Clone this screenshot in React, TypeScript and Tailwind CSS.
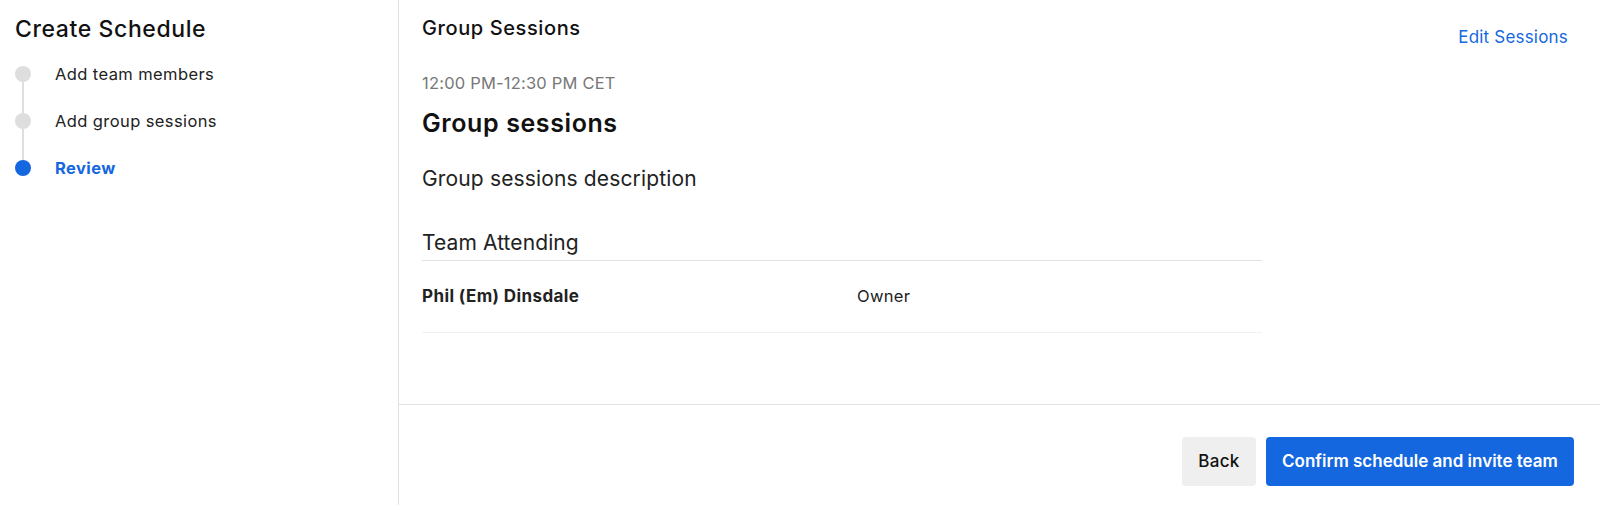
import React from 'react';

const steps = [
  { label: 'Add team members', done: true },
  { label: 'Add group sessions', done: true },
  { label: 'Review', active: true },
];

export default function App() {
  return (
    <div className="flex h-[505px] w-[1600px] bg-white text-[#111] font-['Inter',sans-serif]">
      <aside className="w-[399px] shrink-0 border-r border-[#e2e2e2] pl-[15px] pt-[13px]">
        <h1 className="text-[23px] leading-[32px] font-medium tracking-[0.6px]">Create Schedule</h1>
        <div className="mt-[21px] flex flex-col">
          {steps.map((s, i) => (
            <div key={s.label} className="flex">
              <div className="flex w-[16px] flex-col items-center">
                <div className={`h-[16px] w-[16px] rounded-full ${s.active ? 'bg-[#1467df]' : 'bg-[#dedede]'}`} />
                {i < steps.length - 1 && <div className="h-[31px] w-[2px] bg-[#dedede]" />}
              </div>
              <span
                className={`ml-[24px] -mt-[3px] text-[16.5px] leading-[22px] tracking-[0.4px] ${s.active ? 'font-bold text-[#1467df]' : 'text-[#222]'}`}
              >
                {s.label}
              </span>
            </div>
          ))}
        </div>
      </aside>
      <main className="flex flex-1 flex-col">
        <div className="h-[405px] border-b border-[#e2e2e2] pl-[23px] pr-[32px] pt-[14px]">
          <div className="flex h-[35px] items-start justify-between">
            <h2 className="text-[20px] leading-[28px] font-medium tracking-[0.6px]">Group Sessions</h2>
            <a className="mt-[11px] text-[17px] leading-[24px] tracking-[0.2px] text-[#1467df]">Edit Sessions</a>
          </div>
          <div className="mt-[22px] text-[16.5px] leading-[24px] tracking-[0.2px] text-[#777]">12:00 PM-12:30 PM CET</div>
          <h3 className="mt-[12px] text-[25px] leading-[32px] font-semibold tracking-[0.6px]">Group sessions</h3>
          <p className="mt-[26px] text-[21px] leading-[28px] tracking-[0.15px] text-[#222]">Group sessions description</p>
          <div className="w-[840px]">
            <div className="mt-[36px] border-b border-[#e2e2e2] pb-[3px] text-[21px] leading-[28px] tracking-[0.1px] text-[#222]">
              Team Attending
            </div>
            <div className="flex h-[72px] items-center border-b border-[#f0f0f0] text-[#222]">
              <span className="w-[435px] text-[17px] font-bold tracking-[0.4px]">Phil (Em) Dinsdale</span>
              <span className="text-[16.5px] tracking-[0.3px]">Owner</span>
            </div>
          </div>
        </div>
        <div className="flex flex-1 items-start justify-end gap-[10px] pr-[26px] pt-[32px]">
          <button className="h-[49px] w-[74px] rounded-[4px] bg-[#efefef] text-[17px] font-medium tracking-[0.3px] text-[#111]">
            Back
          </button>
          <button className="h-[49px] w-[308px] rounded-[4px] bg-[#1467df] text-[17px] font-semibold text-white">
            Confirm schedule and invite team
          </button>
        </div>
      </main>
    </div>
  );
}
